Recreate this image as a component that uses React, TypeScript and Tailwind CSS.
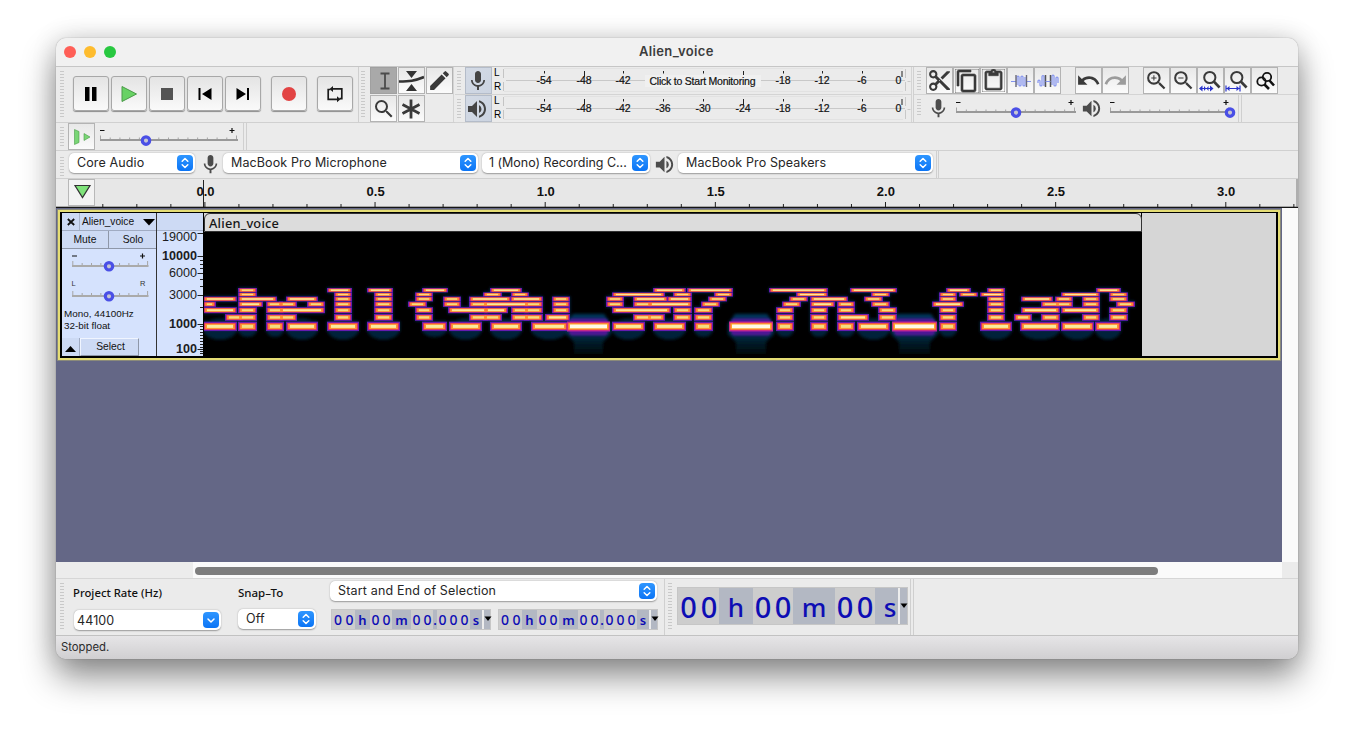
import React from "react";
import {
  MdContentCopy,
  MdContentCut,
  MdContentPaste,
  MdEdit,
  MdMic,
  MdRedo,
  MdSearch,
  MdUndo,
  MdVolumeUp,
  MdZoomIn,
  MdZoomOut,
} from "react-icons/md";

type Run = [number, number];

// Energy bands of the spectrogram: centre line, thickness and [start, end] runs.
const BANDS: { y: number; h: number; runs: Run[] }[] = [
  { y: 290.2, h: 4.4, runs: [[238, 257], [327, 352], [367, 393], [422, 448], [490, 522], [653, 686], [687, 733], [769, 828], [850, 897], [946, 971], [987, 1005], [1096, 1121]] },
  { y: 294.5, h: 4.2, runs: [[238, 257], [334, 352], [374, 393], [415, 433], [483, 502], [511, 529], [612, 665], [673, 692], [714, 733], [796, 828], [871, 890], [939, 957], [959, 978], [980, 1005], [1061, 1100], [1109, 1128]] },
  { y: 299, h: 4.9, runs: [[203, 237], [238, 277], [286, 318], [334, 352], [374, 393], [415, 433], [443, 461], [469, 511], [510, 543], [552, 570], [606, 624], [633, 668], [667, 692], [708, 727], [789, 808], [810, 848], [864, 883], [939, 957], [987, 1005], [1021, 1053], [1055, 1073], [1082, 1100], [1109, 1128]] },
  { y: 304.2, h: 5.4, runs: [[203, 216], [238, 263], [266, 283], [279, 297], [307, 325], [334, 352], [374, 393], [408, 427], [443, 461], [469, 488], [483, 529], [524, 543], [552, 570], [606, 624], [633, 652], [648, 692], [701, 720], [782, 801], [810, 835], [837, 855], [871, 890], [932, 964], [987, 1005], [1041, 1060], [1055, 1073], [1082, 1100], [1116, 1135]] },
  { y: 310.2, h: 6, runs: [[203, 237], [238, 257], [266, 284], [279, 325], [334, 352], [374, 393], [415, 433], [448, 488], [484, 508], [511, 529], [524, 543], [552, 570], [612, 671], [673, 692], [694, 713], [776, 794], [810, 828], [837, 855], [878, 897], [939, 957], [987, 1005], [1021, 1060], [1061, 1100], [1109, 1128]] },
  { y: 317.4, h: 6.8, runs: [[225, 243], [238, 257], [266, 284], [279, 297], [334, 352], [374, 393], [415, 433], [469, 488], [483, 502], [511, 529], [524, 543], [545, 570], [633, 652], [647, 665], [673, 692], [694, 713], [776, 794], [810, 828], [837, 869], [878, 897], [939, 957], [987, 1005], [1014, 1032], [1041, 1060], [1082, 1100], [1109, 1128]] },
  { y: 326.4, h: 9.4, runs: [[203, 237], [238, 257], [266, 284], [286, 318], [327, 359], [367, 400], [422, 447], [449, 482], [490, 522], [531, 568], [612, 645], [653, 686], [694, 713], [776, 794], [810, 828], [837, 855], [857, 890], [939, 957], [980, 1012], [1020, 1060], [1061, 1094], [1095, 1121]] },
];
const FLOORS: Run[] = [[566, 611], [728, 774], [891, 938]];

function Spectrogram() {
  return (
    <svg width="937" height="125" viewBox="204 232 937 125" className="block shrink-0 bg-black">
      <defs>
        <filter id="soft" x="-5%" y="-20%" width="110%" height="140%">
          <feGaussianBlur stdDeviation="0.6 0.35" />
        </filter>
        <filter id="glow" x="-10%" y="-50%" width="120%" height="200%">
          <feGaussianBlur stdDeviation="1.6 1.8" />
        </filter>
        <filter id="halo" x="-10%" y="-50%" width="120%" height="200%">
          <feGaussianBlur stdDeviation="1 1.3" />
        </filter>
        <linearGradient id="pool" x1="0" x2="0" y1="0" y2="1">
          <stop offset="0" stopColor="#03385c" />
          <stop offset="0.5" stopColor="#032d4a" />
          <stop offset="0.75" stopColor="#011a26" />
          <stop offset="1" stopColor="#000c10" stopOpacity="0.7" />
        </linearGradient>
      </defs>
      <g filter="url(#glow)">
        {BANDS.map((b, i) =>
          b.runs.map(([a, z]) => (
            <rect key={`${i}-${a}`} x={a} y={b.y - b.h / 2 - 0.5} width={z - a} height={b.h + 1} fill="#05254a" />
          )),
        )}
        {BANDS[6].runs.map(([a, z]) => (
          <ellipse key={a} cx={(a + z) / 2} cy="329" rx={(z - a) / 2} ry={z - a > 25 ? 10.5 : 8} fill="#03233a" />
        ))}
        {FLOORS.map(([a, z]) => (
          <path key={a} d={`M${a} 324L${a + 7} 314H${z - 7}L${z} 324L${z} 334L${z - 8} 342V354H${a + 8}V342L${a} 334Z`} fill="url(#pool)" />
        ))}
      </g>
      <g filter="url(#halo)">
        {FLOORS.map(([a, z]) => (
          <rect key={a} x={a + 3} y="318.5" width={z - a - 6} height="17" rx="4" fill="#4f1894" />
        ))}
      </g>
      <g filter="url(#soft)">
        {BANDS.map((b, i) =>
          b.runs.map(([a, z]) => (
            <rect key={`${i}-${a}`} x={a} y={b.y - b.h / 2} width={z - a} height={b.h} fill="#641ab0" />
          )),
        )}
        {BANDS.map((b, i) =>
          b.runs.map(([a, z]) => (
            <rect key={`${i}-${a}`} x={a + 1.1} y={b.y - b.h * 0.37} width={z - a - 2.2} height={b.h * 0.74} fill="#e4305e" />
          )),
        )}
        {BANDS.map((b, i) =>
          b.runs.map(([a, z]) => (
            <rect key={`${i}-${a}`} x={a + 2.2} y={b.y - b.h * 0.29} width={z - a - 4.4} height={b.h * 0.58} fill="#ff9430" />
          )),
        )}
        {BANDS.map((b, i) =>
          b.runs.map(([a, z]) => (
            <rect
              key={`${i}-${a}`}
              x={a + 4}
              y={b.y - b.h * 0.16}
              width={z - a - 8}
              height={b.h * 0.32}
              fill={z - a > 22 ? "#faea9c" : "#f5dc80"}
            />
          )),
        )}
        {FLOORS.map(([a, z]) => (
          <g key={a}>
            <rect x={a + 1} y="321.5" width={z - a - 2} height="10" fill="#b41ea4" />
            <rect x={a + 1.6} y="322.5" width={z - a - 3.2} height="7.8" fill="#f04a50" />
            <rect x={a + 2.5} y="323.3" width={z - a - 5} height="6.2" fill="#ffa52a" />
            <rect x={a + 4} y="324.5" width={z - a - 8} height="3.8" fill="#fffbe6" />
          </g>
        ))}
      </g>
    </svg>
  );
}

function Grip({ rows, className = "" }: { rows: number; className?: string }) {
  return (
    <div className={`flex w-1 shrink-0 flex-col gap-[2px] ${className}`}>
      {Array.from({ length: rows }, (_, i) => (
        <div key={i} className="h-px w-1 shrink-0 bg-[#c9c9c9]" />
      ))}
    </div>
  );
}

function ToolButton({ children, tone = "light" }: { children?: React.ReactNode; tone?: "light" | "dark" | "blue" }) {
  const fill =
    tone === "dark"
      ? "bg-[#a9a9a9] border-[#a0a0a0]"
      : tone === "blue"
        ? "bg-linear-to-br from-[#d3dae5] to-[#ccd4e1] border-[#b4bcc9]"
        : "bg-linear-to-b from-[#e8e8e8] to-[#fbfbfb] border-[#b3b3b3]";
  return (
    <div className={`flex h-[27px] w-[27px] shrink-0 items-center justify-center border text-[#3a3a3a] ${fill}`}>{children}</div>
  );
}

function TransportButton({ children, className = "" }: { children: React.ReactNode; className?: string }) {
  return (
    <div
      className={`flex h-[35px] w-9 shrink-0 items-center justify-center rounded-[3px] border border-[#a8a8a8] bg-linear-to-b from-[#e4e4e4] to-[#fafafa] shadow-[0_1px_1px_#8c8c8c] ${className}`}
    >
      {children}
    </div>
  );
}

function Slider({ width, value, ticks, plus }: { width: number; value: number; ticks: number; plus: number }) {
  return (
    <svg width={width + 8} height="24" className="block shrink-0 overflow-visible">
      <path d={`M4 4.5h4.5M${plus - 2.5} 4.5h5M${plus} 2v5`} stroke="#111" strokeWidth="1.2" />
      {Array.from({ length: ticks }, (_, i) => (
        <rect key={i} x={4 + (i * (width - 2)) / (ticks - 1)} y={i === 0 || i === ticks - 1 ? 9.5 : 11.5} width="1" height={i === 0 || i === ticks - 1 ? 4.5 : 2.5} fill="#a5a5a5" />
      ))}
      <rect x="4" y="13" width={width} height="2" fill="#999" />
      <circle cx={value} cy="14.6" r="3.7" fill="#c6c6d2" stroke="#4a4fe6" strokeWidth="3.2" />
    </svg>
  );
}

function Stepper({ single = false }: { single?: boolean }) {
  return (
    <span className="flex h-4 w-4 shrink-0 items-center justify-center rounded-[4px] bg-linear-to-b from-[#2e96ff] to-[#0a74f5]">
      <svg width="16" height="16" fill="none" stroke="#fff" strokeWidth="1.5" strokeLinecap="round" strokeLinejoin="round">
        {single ? <path d="M5 7l3 3 3-3" /> : <path d="M5.2 6.2L8 3.5l2.8 2.7M5.2 9.8L8 12.5l2.8-2.7" />}
      </svg>
    </span>
  );
}

function Select({ label, className, single, pad = "" }: { label: string; className: string; single?: boolean; pad?: string }) {
  return (
    <div
      className={`flex h-5 shrink-0 items-center justify-between rounded-[5px] bg-white pr-[2px] font-['Inter'] text-[12.5px] tracking-[0.12px] whitespace-nowrap text-[#262626] shadow-[0_0.5px_1.5px_rgba(0,0,0,0.35)] ${className}`}
    >
      <span className={pad}>{label}</span>
      <Stepper single={single} />
    </div>
  );
}

const METER_MARKS = [
  [42, "-54"],
  [82, "-48"],
  [121, "-42"],
  [161, "-36"],
  [201, "-30"],
  [241, "-24"],
  [281, "-18"],
  [320, "-12"],
  [360, "-6"],
] as const;

function Meter({ prompt = false }: { prompt?: boolean }) {
  return (
    <svg width="410" height="27" className="block shrink-0">
      <path d="M1.5 2v9M1.5 15v9" stroke="#c4c4c4" />
      <path d="M2 1.5h399M2 24.5h399" stroke="#e2e2e2" />
      <path d="M4 13.5h399" stroke="#c8c8c8" />
      <path d="M403.5 2v9M405.5 14.5h3M403.5 15v9" stroke="#c8c8c8" strokeWidth="1" />
      <g fontFamily="Liberation Sans, sans-serif" fontSize="10.5" fill="#111" stroke="#111" strokeWidth="0.2" textAnchor="middle">
        {METER_MARKS.map(([x, t]) =>
          prompt && x > 130 && x < 270 ? null : (
            <text key={x} x={x} y="16.6">
              {t}
            </text>
          ),
        )}
        <text x="396.5" y="16.6">
          0
        </text>
        {METER_MARKS.map(([x]) => (
          <rect key={x} x={x} y="4" width="1" height={x === 82 || x === 241 ? 6 : 2.5} fill="#222" stroke="none" />
        ))}
        <rect x="399.5" y="4" width="1" height="6" fill="#222" stroke="none" />
        {prompt && (
          <g>
            <rect x="143" y="8" width="116" height="12" fill="#f0f0f0" stroke="none" />
            <text x="200.5" y="17.5" textLength="106">
              Click to Start Monitoring
            </text>
          </g>
        )}
      </g>
    </svg>
  );
}

function MeterRow({ icon, prompt }: { icon: React.ReactNode; prompt?: boolean }) {
  return (
    <div className="flex h-7 border-b border-[#d4d4d4]">
      <Grip rows={7} className="mt-1 ml-[2px]" />
      <div className="ml-1">
        <ToolButton tone="blue">{icon}</ToolButton>
      </div>
      <div className="ml-[2px] flex w-2 shrink-0 flex-col font-['Liberation_Sans'] text-[10px] leading-[14px] text-black">
        <span className="h-[13px] leading-3">L</span>
        <span className="h-[14px]">R</span>
      </div>
      <Meter prompt={prompt} />
    </div>
  );
}

function WaveIcon({ outer }: { outer?: boolean }) {
  return outer ? (
    <svg width="22" height="18" fill="none" className="shrink-0">
      <path d="M1 11V9a1 1 0 0 1 2 0v4a1 1 0 0 0 2 0V4.500a1 1 0 0 1 2 0V14M15 13V4a1 1 0 0 1 2 0v9a1 1 0 0 0 2 0V6a1 1 0 0 1 2 0v5" stroke="#8292ee" strokeWidth="1.2" />
      <path d="M8.500 3v12M13.500 3v12" stroke="#555" strokeWidth="1.5" />
      <path d="M8.500 9.500h5" stroke="#8292ee" />
    </svg>
  ) : (
    <svg width="22" height="18" fill="none" className="shrink-0">
      <path d="M1 9.500h5M17 9.500h4M7 13V5a1 1 0 0 1 2 0v8a1 1 0 0 0 2 0V5a1 1 0 0 1 2 0v8a1 1 0 0 0 2 0V5" stroke="#8292ee" strokeWidth="1.2" />
      <path d="M6 3v12M16.500 3v12" stroke="#6a6a78" strokeWidth="1.4" />
    </svg>
  );
}

function TransportToolbar() {
  return (
    <div className="flex w-[303px] shrink-0 border-r border-[#cfcfcf]">
      <Grip rows={16} className="mt-1 ml-1" />
      <div className="mt-[9px] ml-[9px] flex gap-[2px]">
        <TransportButton>
          <svg width="16" height="16">
            <path d="M2 1h4.500v14H2zM9 1h4.500v14H9z" fill="#000" />
          </svg>
        </TransportButton>
        <TransportButton>
          <svg width="18" height="18">
            <path d="M2 1.500L16.500 9 2 16.500z" fill="#68d264" stroke="#4a9a48" />
          </svg>
        </TransportButton>
        <TransportButton>
          <div className="h-3 w-3 bg-[#545454]" />
        </TransportButton>
        <TransportButton>
          <svg width="16" height="14">
            <path d="M1.500 1h2v12h-2zM14.500 1v12L5 7z" fill="#000" />
          </svg>
        </TransportButton>
        <TransportButton>
          <svg width="16" height="14">
            <path d="M12 1h2v12h-2zM1.500 1v12L11 7z" fill="#000" />
          </svg>
        </TransportButton>
        <TransportButton className="ml-2">
          <div className="h-[14px] w-[14px] rounded-full bg-[#e24444]" />
        </TransportButton>
        <TransportButton className="ml-2">
          <svg width="18" height="18" fill="none" stroke="#1b1b1b" strokeWidth="1.7">
            <path d="M6 3.900h9.800v9.800h-2.300M12 14.300H2.200V4.500h2.300" />
            <path d="M7 0.900L3.500 3.900l3.500 3zM11 11.300l3.500 3-3.500 3z" fill="#1b1b1b" stroke="none" />
          </svg>
        </TransportButton>
      </div>
    </div>
  );
}

function ToolsToolbar() {
  return (
    <div className="flex w-[95px] shrink-0 border-r border-[#d4d4d4]">
      <Grip rows={16} className="mt-1 ml-[2px]" />
      <div className="ml-[5px] grid h-[55px] grid-cols-[27px_27px_27px] content-start gap-px">
        <ToolButton tone="dark">
          <svg width="20" height="22" fill="none" stroke="#4b4b4b" strokeWidth="1.8">
            <path d="M6.500 3.500h9M6.500 18.500h9M11 4v14" />
          </svg>
        </ToolButton>
        <ToolButton>
          <svg width="25" height="22" className="shrink-0">
            <path d="M7 1h11l-5.500 7zM7 21h11L12.500 14z" fill="#333" />
            <path d="M0 11.500c11 0 15-0.500 25-4.500" fill="none" stroke="#333" strokeWidth="2.6" />
          </svg>
        </ToolButton>
        <ToolButton>
          <MdEdit size={25} className="mr-px shrink-0" />
        </ToolButton>
        <ToolButton>
          <MdSearch size={24} />
        </ToolButton>
        <ToolButton>
          <svg width="22" height="22" stroke="#3a3a3a" strokeWidth="2.8" className="mr-px shrink-0">
            <path d="M11 1.500v19M2.500 6.500l17 9M19.500 6.500l-17 9" />
          </svg>
        </ToolButton>
      </div>
    </div>
  );
}

function EditToolbar() {
  return (
    <div className="flex min-w-0 flex-1 flex-col">
      <div className="flex h-7 border-b border-[#d4d4d4]">
        <Grip rows={7} className="mt-1 ml-[3px]" />
        <div className="ml-[5px] flex">
          <ToolButton>
            <MdContentCut size={25} className="mr-px shrink-0" />
          </ToolButton>
          <ToolButton>
            <MdContentCopy size={24} className="shrink-0 stroke-[#3a3a3a] stroke-[0.6px]" />
          </ToolButton>
          <ToolButton>
            <MdContentPaste size={23} className="shrink-0 stroke-[#3a3a3a] stroke-[0.6px]" />
          </ToolButton>
          <ToolButton>
            <WaveIcon />
          </ToolButton>
          <ToolButton>
            <WaveIcon outer />
          </ToolButton>
        </div>
        <div className="ml-[14px] flex">
          <ToolButton>
            <MdUndo size={25} className="shrink-0" />
          </ToolButton>
          <ToolButton>
            <MdRedo size={25} className="shrink-0 text-[#9c9c9c]" />
          </ToolButton>
        </div>
        <div className="ml-[14px] flex">
          <ToolButton>
            <MdZoomIn size={25} className="shrink-0" />
          </ToolButton>
          <ToolButton>
            <MdZoomOut size={25} className="shrink-0" />
          </ToolButton>
          <ToolButton>
            <svg width="25" height="25" fill="none" className="shrink-0">
              <circle cx="11.8" cy="9.500" r="5.600" stroke="#3a3a3a" strokeWidth="2" />
              <path d="M15.800 13.500l5.800 6" stroke="#3a3a3a" strokeWidth="2.6" />
              <path d="M2 20.500h12" stroke="#2a34cc" strokeWidth="1" />
              <path d="M4.500 17.500v6l-3.500-3zM12 17.500v6l3.500-3zM6 18l2 2.500L6 23zM10.500 18l-2 2.500 2 2.500z" fill="#2a34cc" />
            </svg>
          </ToolButton>
          <ToolButton>
            <svg width="25" height="25" fill="none" className="shrink-0">
              <circle cx="11.8" cy="9.500" r="5.600" stroke="#3a3a3a" strokeWidth="2" />
              <path d="M15.800 13.500l5.800 6" stroke="#3a3a3a" strokeWidth="2.6" />
              <path d="M1 17.500v6M15 17.500v6M1.500 20.500h13" stroke="#2a34cc" strokeWidth="1.2" />
              <path d="M4.500 18l-3 2.500 3 2.500zM11.500 18l3 2.500-3 2.500z" fill="#2a34cc" />
            </svg>
          </ToolButton>
          <ToolButton>
            <svg width="22" height="22" fill="none" stroke="#111" className="shrink-0">
              <circle cx="13" cy="7" r="4.200" strokeWidth="1.8" />
              <circle cx="7.500" cy="11.500" r="4.200" strokeWidth="1.8" />
              <path d="M15.500 10.500l4.500 5M10.500 14.500l4.500 4.500" strokeWidth="2.6" />
            </svg>
          </ToolButton>
        </div>
      </div>
      <div className="flex h-[27px]">
        <Grip rows={6} className="mt-1 ml-[3px]" />
        <MdMic size={23} className="mt-[2px] ml-[6px] shrink-0 text-[#4c4c4c]" />
        <div className="ml-[2px] flex pt-[3px]">
          <Slider width={120} value={64} ticks={13} plus={119} />
        </div>
        <MdVolumeUp size={23} className="mt-[2px] shrink-0 text-[#4c4c4c]" />
        <div className="flex w-[136px] border-r border-[#d0d0d0] pt-[3px] pl-[3px]">
          <Slider width={120} value={124} ticks={13} plus={120} />
        </div>
        <div className="ml-[2px] flex-1 border-l border-[#cfcfcf]" />
      </div>
    </div>
  );
}

function Timeline() {
  return (
    <svg width="1242" height="29" className="block shrink-0 bg-[#e7e7e7]">
      <rect x="0" y="0" width="12" height="28" fill="#ebebeb" />
      <rect x="12.5" y="0.5" width="26" height="26" fill="#f3f3f3" stroke="#b8b8b8" />
      <path d="M19 6.500h15L26.500 18.500z" fill="#7fe37a" stroke="#333" strokeWidth="1.2" />
      {Array.from({ length: 36 }, (_, i) => (
        <rect key={i} x={46.3 + i * 34.03} y={(i - 3) % 5 === 0 ? 23 : 25} width="1" height={(i - 3) % 5 === 0 ? 5 : 3} fill="#222" />
      ))}
      <rect x="147" y="1" width="1" height="27" fill="#222" />
      <g fontFamily="Liberation Sans, sans-serif" fontSize="13" fontWeight="700" textAnchor="middle" fill="#111">
        {["0.0", "0.5", "1.0", "1.5", "2.0", "2.5", "3.0"].map((t, i) => (
          <text key={t} x={149.5 + i * 170.1} y="17">
            {t}
          </text>
        ))}
      </g>
      <rect x="0" y="27.7" width="1242" height="1.3" fill="#151515" />
      <rect x="1240.5" y="0" width="1" height="28" fill="#777" />
    </svg>
  );
}

const SCALE: [string, number, boolean][] = [
  ["19000", 24, false],
  ["10000", 43, true],
  ["6000", 60, false],
  ["3000", 82, false],
  ["1000", 111, true],
  ["100", 136, true],
];

function FrequencyRuler() {
  return (
    <svg width="46" height="143" className="block shrink-0 bg-[#d5e2fd]">
      <rect width="46" height="18" fill="#cddaf4" />
      <rect y="17" width="46" height="1" fill="#a9b4ca" />
      <g fontFamily="Liberation Sans, sans-serif" fontSize="12.6" textAnchor="end" fill="#1c1c22">
        {SCALE.map(([t, y, bold]) => (
          <text key={t} x="40" y={y + 4.3} fontWeight={bold ? 700 : 400}>
            {t}
          </text>
        ))}
      </g>
      {[20, 43, 60, 82, 111, 136].map((y) => (
        <rect key={y} x="40.5" y={y} width="5.5" height="1" fill="#222" />
      ))}
      {[47, 51, 55, 66, 73, 94, 113, 116, 119, 122, 125, 128, 131, 134, 138, 140].map((y) => (
        <rect key={y} x="43" y={y} width="3" height="1" fill="#222" />
      ))}
    </svg>
  );
}

function TrackSlider({ left, right, small }: { left: string; right: string; small?: boolean }) {
  return (
    <svg width="94" height="28" className="block overflow-visible">
      {small ? (
        <g fontFamily="Liberation Sans, sans-serif" fontSize="7.5" fill="#333">
          <text x="9.500" y="5">
            {left}
          </text>
          <text x="78" y="5">
            {right}
          </text>
        </g>
      ) : (
        <path d="M10 5h5M78 5h5M80.500 2.500v5" stroke="#111" strokeWidth="1.2" />
      )}
      {Array.from({ length: 9 }, (_, i) => (
        <rect key={i} x={10.3 + i * 9.35} y={i % 8 === 0 ? 10 : 12} width="1" height={i % 8 === 0 ? 5 : 3} fill="#a5a5a5" />
      ))}
      <rect x="10" y="14" width="76.5" height="2" fill="#aaa" />
      <circle cx="47" cy="15.3" r="3.700" fill="#c6c6d2" stroke="#4a4fe6" strokeWidth="3.2" />
    </svg>
  );
}

function TrackPanel() {
  return (
    <div className="flex w-[95px] shrink-0 flex-col border-r border-[#333] bg-[#d5e2fd] font-['Liberation_Sans'] text-[10px] text-[#111]">
      <div className="flex h-[18px] shrink-0 border-b border-[#a0abc2] bg-[#cddaf4]">
        <div className="flex w-[18px] items-center justify-center border-r border-[#a9b4ca] pl-px">
          <svg width="8" height="8" stroke="#111" strokeWidth="1.8">
            <path d="M0.800 1l6.400 6M7.200 1L0.800 7" />
          </svg>
        </div>
        <span className="ml-[2px] w-[61px] text-[10.2px] leading-[17px]">Alien_voice</span>
        <svg width="12" height="7" className="mt-[6px] shrink-0">
          <path d="M0 0h12L6 6.500z" fill="#000" />
        </svg>
      </div>
      <div className="flex h-[18px] shrink-0 border-b border-[#8e97a8] bg-[#cddaf4] text-center text-[10.3px] leading-[17px]">
        <span className="w-[47px] border-r border-[#8e97a8]">Mute</span>
        <span className="w-[47px] pl-px">Solo</span>
      </div>
      <div className="mt-[2px] h-[30px] shrink-0">
        <TrackSlider left="-" right="+" />
      </div>
      <div className="h-[27px] shrink-0">
        <TrackSlider left="L" right="R" small />
      </div>
      <div className="ml-[2px] h-[30px] shrink-0 text-[9.9px] leading-[12px] whitespace-nowrap">
        <div>Mono, 44100Hz</div>
        <div>32-bit float</div>
      </div>
      <div className="flex h-[18px] shrink-0">
        <div className="flex w-[18px] items-center justify-center border-r border-[#a0abc2] bg-[#cddaf4]">
          <svg width="11" height="6" className="mt-1">
            <path d="M0 6h11L5.500 0z" fill="#000" />
          </svg>
        </div>
        <div className="w-[59px] border border-t-[#f0f5ff] border-r-[#8e97a8] border-b-[#8e97a8] border-l-[#f0f5ff] bg-[#cddaf4] pl-[2px] text-center text-[10.3px] leading-[15px]">
          Select
        </div>
      </div>
    </div>
  );
}

type Cell = { t: string; w: number; label?: boolean };

const SMALL_CELLS: Cell[] = [
  { t: "0", w: 12 },
  { t: "0", w: 11 },
  { t: "h", w: 15, label: true },
  { t: "0", w: 11 },
  { t: "0", w: 11 },
  { t: "m", w: 19, label: true },
  { t: "0", w: 11 },
  { t: "0", w: 11 },
  { t: ".", w: 4, label: true },
  { t: "0", w: 11 },
  { t: "0", w: 11 },
  { t: "0", w: 11 },
  { t: "s", w: 12, label: true },
];

const BIG_CELLS: Cell[] = [
  { t: "0", w: 21 },
  { t: "0", w: 20 },
  { t: "h", w: 34, label: true },
  { t: "0", w: 20 },
  { t: "0", w: 20 },
  { t: "m", w: 42, label: true },
  { t: "0", w: 20 },
  { t: "0", w: 20 },
  { t: "s", w: 23, label: true },
];

function TimeField({ big }: { big?: boolean }) {
  const cells = big ? BIG_CELLS : SMALL_CELLS;
  return (
    <div
      className={`flex shrink-0 border border-[#c6c6c6] bg-[#b3b8c3] font-['Noto_Sans'] text-[#0d0db4] ${big ? "h-[38px] w-[231px] text-[29px] leading-[38px] font-medium" : "h-[21px] w-[160px] text-[14px] leading-[20px] font-medium"}`}
    >
      {cells.map((c, i) => (
        <span
          key={i}
          style={{ width: c.w }}
          className={`block h-full shrink-0 text-center ${c.label ? (big ? "text-[26px]" : "text-[13px] font-semibold") : "bg-[#cdcdcd]"} ${big && c.t === "s" ? "pl-[7px]" : ""}`}
        >
          {c.t}
        </span>
      ))}
      <div className="flex flex-1 justify-center border-l-2 border-[#ededed]">
        <svg width="8" height="6" className={`shrink-0 ${big ? "mt-[15px]" : "mt-[6px]"}`}>
          <path d="M0.500 0.500h7L4 5z" fill="#000" />
        </svg>
      </div>
    </div>
  );
}

export default function App() {
  return (
    <div className="h-[733px] w-[1354px] overflow-hidden bg-white pt-[38px] pl-14">
      <div className="flex h-[621px] w-[1242px] flex-col overflow-hidden rounded-[10px] bg-[#ebebeb] shadow-[0_0_1px_rgba(0,0,0,0.5),0_18px_34px_rgba(0,0,0,0.44),0_0_26px_rgba(0,0,0,0.14)]">
        <header className="flex h-[29px] shrink-0 items-center border-b border-[#c6c6c6] bg-[#f1f1f1] pl-2">
          <div className="flex gap-2">
            <span className="h-3 w-3 rounded-full bg-[#ff5f57]" />
            <span className="h-3 w-3 rounded-full bg-[#febc2e]" />
            <span className="h-3 w-3 rounded-full bg-[#28c840]" />
          </div>
          <h1 className="ml-[523px] font-['Inter'] text-[13px] font-semibold tracking-[0.35px] text-[#3c3c3c]">Alien_voice</h1>
        </header>

        <div className="flex h-14 shrink-0 border-b border-[#d0d0d0]">
          <TransportToolbar />
          <ToolsToolbar />
          <div className="w-[458px] shrink-0 border-r border-[#d4d4d4] pl-px">
            <MeterRow icon={<MdMic size={24} className="mr-px shrink-0 text-[#444]" />} prompt />
            <MeterRow icon={<MdVolumeUp size={24} className="mr-[3px] shrink-0 text-[#444]" />} />
          </div>
          <div className="ml-px w-px shrink-0 bg-[#d0d0d0]" />
          <EditToolbar />
        </div>

        <div className="flex h-7 shrink-0 border-b border-[#d0d0d0]">
          <Grip rows={7} className="mt-1 ml-1" />
          <div className="ml-1">
            <ToolButton>
              <svg width="20" height="20">
                <path d="M2.500 2.500l4.500 2v11l-4.500 2z" fill="#79d675" stroke="#4a9a48" strokeWidth="0.6" />
                <path d="M12 6.500l6 3.500-6 3.500z" fill="#79d675" stroke="#4a9a48" strokeWidth="0.6" />
              </svg>
            </ToolButton>
          </div>
          <div className="flex w-[149px] border-r border-[#d0d0d0] pt-[3px] pl-px">
            <Slider width={138} value={50} ticks={15} plus={136} />
          </div>
          <div className="ml-[2px] flex-1 border-l border-[#cfcfcf]" />
        </div>

        <div className="flex h-7 shrink-0 border-b border-[#d0d0d0] pt-[2px]">
          <Grip rows={7} className="mt-1 ml-1" />
          <Select label="Core Audio" className="ml-[5px] w-[126px] pl-2" />
          <MdMic size={23} className="ml-1 shrink-0 text-[#4c4c4c]" />
          <Select label="MacBook Pro Microphone" className="ml-px w-[255px] pl-2" />
          <Select label="1 (Mono) Recording C..." className="ml-1 w-[168px] pl-[7px]" pad="tracking-[-0.02px]" />
          <MdVolumeUp size={23} className="ml-[3px] shrink-0 text-[#4c4c4c]" />
          <Select label="MacBook Pro Speakers" className="ml-[2px] w-[255px] pl-2" />
          <div className="-mt-[2px] ml-[3px] w-[3px] shrink-0 border-x border-[#cfcfcf]" />
        </div>

        <Timeline />

        <div className="flex h-[354px] shrink-0">
          <div className="flex w-[1226px] shrink-0 flex-col bg-[#646786]">
            <div className="mt-[1px] ml-px h-[152px] w-[1224px] border border-[#8a8a7a] bg-[#e5dd75] p-[2px]">
              <div className="flex h-[146px] w-[1218px] border-t border-r-2 border-b-2 border-l-2 border-black bg-[#d6d6d6]">
                <TrackPanel />
                <FrequencyRuler />
                <div className="w-[939px] shrink-0 border-x border-black bg-[#d6d6d6]">
                  <div className="h-[19px] w-[938px] rounded-t-[6px] border border-[#333] bg-[#dcdcdc] pl-1 font-['Noto_Sans'] text-[12.8px] leading-[19px] font-medium tracking-[0.2px] text-[#161616]">
                    Alien_voice
                  </div>
                  <Spectrogram />
                </div>
              </div>
            </div>
          </div>
          <div className="flex-1 bg-[#fafafa]" />
        </div>

        <div className="flex h-4 shrink-0">
          <div className="w-[137px] shrink-0 bg-[#ececec]" />
          <div className="flex w-[1089px] shrink-0 items-center bg-[#fafafa] pt-[2px] pl-[2px]">
            <div className="h-2 w-[963px] rounded-full bg-[#7d7d7d]" />
          </div>
        </div>

        <div className="flex h-[57px] shrink-0 border-t border-[#d6d6d6]">
          <Grip rows={16} className="mt-1 ml-1" />
          <div className="ml-[9px] w-[148px] shrink-0">
            <div className="mt-1 h-[27px] font-['Noto_Sans'] text-[11.3px] leading-[20px] font-medium text-[#111]">Project Rate (Hz)</div>
            <Select label="44100" single className="ml-px w-[147px] pl-[3px]" pad="pt-[2px]" />
          </div>
          <div className="ml-[17px] w-[78px] shrink-0">
            <div className="mt-1 h-[26px] font-['Noto_Sans'] text-[11.5px] leading-[20px] font-medium text-[#111]">Snap–To</div>
            <Select label="Off" className="w-[78px] pl-2" />
          </div>
          <div className="ml-[14px] w-[328px] shrink-0 pt-[2px]">
            <Select label="Start and End of Selection" className="w-[327px] pl-2" pad="tracking-[0.17px]" />
            <div className="mt-2 ml-px flex gap-[7px]">
              <TimeField />
              <TimeField />
            </div>
          </div>
          <div className="ml-[6px] w-px shrink-0 bg-[#d0d0d0]" />
          <Grip rows={16} className="mt-1 ml-[3px]" />
          <div className="mt-2 ml-[5px]">
            <TimeField big />
          </div>
          <div className="ml-[2px] w-[4px] shrink-0 border-x border-[#cfcfcf]" />
        </div>

        <footer className="flex min-h-0 flex-1 items-center border-t border-[#c2c2c2] bg-linear-to-b from-[#e6e5e7] to-[#d0cfd1] pl-[5px] font-['Inter'] text-[11.3px] text-[#2c2c2c]">
          Stopped.
        </footer>
      </div>
    </div>
  );
}
